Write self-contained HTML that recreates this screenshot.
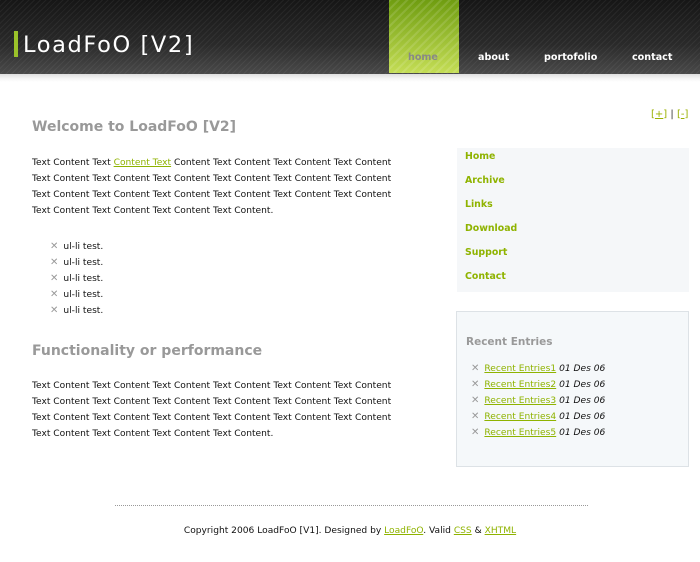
<!DOCTYPE html>
<html><head><meta charset="utf-8"><style>
*{margin:0;padding:0;box-sizing:border-box}
body{width:700px;height:562px;background:#fff;font-family:"DejaVu Sans","Liberation Sans",sans-serif;font-size:9.1px;color:#111;position:relative;overflow:hidden}
.hdr{position:absolute;left:0;top:0;width:700px;height:74px;background:repeating-linear-gradient(135deg,rgba(255,255,255,0.05) 0 1px,transparent 1px 4px),linear-gradient(#161616,#2a2a2a 60%,#4a4a4a)}
.band{position:absolute;left:0;top:74px;width:700px;height:8px;background:linear-gradient(#dedede,#f6f6f6 60%,#fff)}
.logo{position:absolute;left:14px;top:31px;width:4px;height:26px;background:#9bc22a}
.title{position:absolute;left:23px;top:31px;color:#fff;font-size:22.5px;letter-spacing:1.6px;line-height:28px}
.tab{position:absolute;left:389px;top:0;width:70px;height:73px;background:repeating-linear-gradient(135deg,rgba(255,255,255,0.12) 0 2px,transparent 2px 6px),linear-gradient(#6f9d10,#c4dd55)}
.nav{position:absolute;top:52px;color:#fff;font-weight:bold;font-size:9.6px}
a{color:#8fb300;text-decoration:underline}
h2{position:absolute;color:#999;font-size:14px;font-weight:bold}
.p{position:absolute;left:32px;line-height:16px;white-space:nowrap}
.p div{height:16px;line-height:16px}
.x{color:#999;font-size:10px;margin-right:5px;line-height:16px}
.side{position:absolute;left:457px;top:148px;width:232px;height:144px;background:#f5f7f9}
.side div{position:absolute;left:8px;color:#8fb300;font-weight:bold;font-size:9.4px}
.rec{position:absolute;left:456px;top:311px;width:233px;height:156px;background:#f5f8fa;border:1px solid #dde2e6}
</style></head><body>
<div class="hdr"></div><div class="band"></div>
<div class="logo"></div><div class="title">LoadFoO [V2]</div>
<div class="tab"></div>
<div class="nav" style="left:408px;color:#888">home</div>
<div class="nav" style="left:478px">about</div>
<div class="nav" style="left:544px">portofolio</div>
<div class="nav" style="left:632px">contact</div>
<div style="position:absolute;left:651px;top:109px;font-size:10px;color:#333"><a style="text-decoration:none;color:#9ab000">[<u>+</u>]</a> | <a style="text-decoration:none;color:#9ab000">[<u>-</u>]</a></div>
<h2 style="left:32px;top:119px">Welcome to LoadFoO [V2]</h2>
<div class="p" style="top:155px">Text Content Text <a>Content Text</a> Content Text Content Text Content Text Content<br>Text Content Text Content Text Content Text Content Text Content Text Content<br>Text Content Text Content Text Content Text Content Text Content Text Content<br>Text Content Text Content Text Content Text Content.</div>
<div class="p" style="top:239px;left:50px"><div><span class="x">✕</span>ul-li test.</div><div><span class="x">✕</span>ul-li test.</div><div><span class="x">✕</span>ul-li test.</div><div><span class="x">✕</span>ul-li test.</div><div><span class="x">✕</span>ul-li test.</div></div>
<h2 style="left:32px;top:343px">Functionality or performance</h2>
<div class="p" style="top:378px">Text Content Text Content Text Content Text Content Text Content Text Content<br>Text Content Text Content Text Content Text Content Text Content Text Content<br>Text Content Text Content Text Content Text Content Text Content Text Content<br>Text Content Text Content Text Content Text Content.</div>
<div class="side">
<div style="top:3px">Home</div><div style="top:27px">Archive</div><div style="top:51px">Links</div><div style="top:75px">Download</div><div style="top:99px">Support</div><div style="top:123px">Contact</div>
</div>
<div class="rec">
<div style="position:absolute;left:9px;top:24px;color:#999;font-weight:bold;font-size:10.5px">Recent Entries</div>
<div class="p" style="left:14px;top:49px">
<div><span class="x">✕</span><a>Recent Entries1</a> <i>01 Des 06</i></div>
<div><span class="x">✕</span><a>Recent Entries2</a> <i>01 Des 06</i></div>
<div><span class="x">✕</span><a>Recent Entries3</a> <i>01 Des 06</i></div>
<div><span class="x">✕</span><a>Recent Entries4</a> <i>01 Des 06</i></div>
<div><span class="x">✕</span><a>Recent Entries5</a> <i>01 Des 06</i></div></div>
</div>
<div style="position:absolute;left:115px;top:505px;width:473px;border-top:1px dotted #999"></div>
<div style="position:absolute;left:0;width:700px;top:526px;text-align:center">Copyright 2006 LoadFoO [V1]. Designed by <a>LoadFoO</a>. Valid <a>CSS</a> &amp; <a>XHTML</a></div>
</body></html>
